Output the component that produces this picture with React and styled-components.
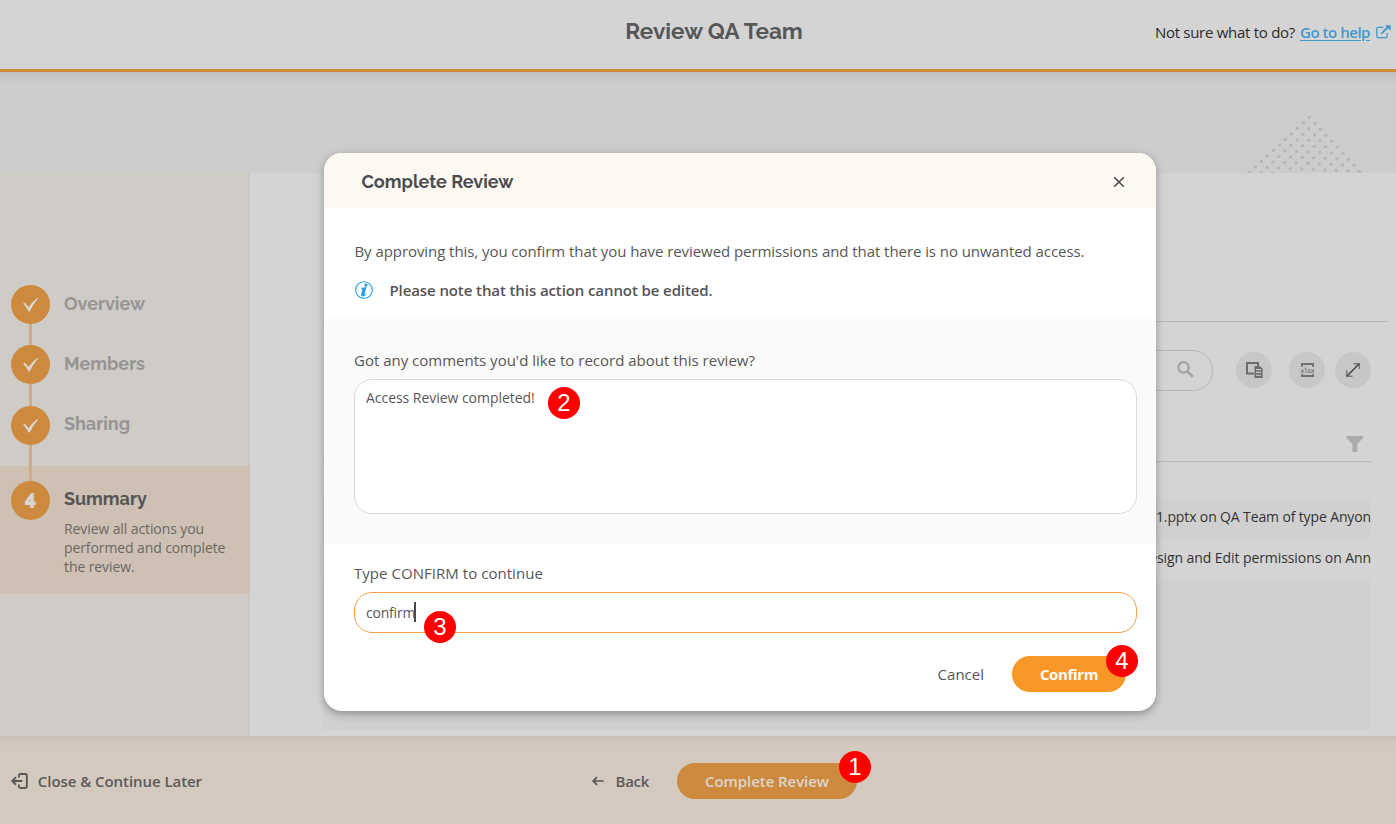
import React from 'react';
import styled, { createGlobalStyle, css } from 'styled-components';

const GlobalStyle = createGlobalStyle`
  * { box-sizing: border-box; }
  body { margin: 0; background: #d4d4d4; }
  button, input, textarea { font: inherit; margin: 0; }
`;

const bodyFont = css`font-family: "Segoe UI", "Open Sans", "Noto Sans", sans-serif;`;
const headingFont = css`
  font-family: "Raleway", "Lato", "Open Sans", sans-serif;
  font-weight: 700;
  font-variant-numeric: lining-nums;
`;
const tracking = css`letter-spacing: ${(p) => p.$track || 0}px;`;

const Page = styled.div`
  ${bodyFont}
  position: relative;
  width: 1396px;
  height: 824px;
  overflow: hidden;
  display: flex;
  flex-direction: column;
  color: #575757;
  font-size: 15px;
  line-height: 20px;
  white-space: nowrap;
`;

const Header = styled.header`
  flex: none;
  height: 72px;
  display: grid;
  grid-template-columns: 1fr auto 1fr;
  padding: 0 5px 7px 37px;
  align-items: center;
  background: #d4d4d4;
  border-bottom: 3px solid #cf8a3c;
`;
const PageTitle = styled.h1`
  ${headingFont}
  grid-column: 2;
  margin: 0;
  font-size: 22.5px;
  line-height: 28px;
  color: #575757;
`;
const Help = styled.div`
  display: flex;
  justify-content: flex-end;
  align-items: center;
  padding-top: 2px;
  color: #2b2b2b;
`;
const HelpText = styled.span`${tracking}`;
const HelpLink = styled.a`
  ${tracking}
  margin: 0 6px 0 5px;
  font-weight: 600;
  color: #4299cc;
  text-decoration: underline;
  text-underline-offset: 2px;
`;

const Banner = styled.div`
  flex: none;
  height: 101px;
  display: flex;
  justify-content: flex-end;
  align-items: flex-end;
  padding-right: 31px;
  background: linear-gradient(#bebebe, #c7c7c7 5px, #cccccc 12px);
`;

const Content = styled.div`
  flex: 1;
  min-height: 0;
  display: flex;
`;
const Sidebar = styled.nav`
  flex: none;
  width: 250px;
  padding-top: 101px;
  background: linear-gradient(to left, #cac7c2, #cfccc7 4px);
`;
const Step = styled.div`
  height: ${(p) => p.$height}px;
  display: flex;
  padding: ${(p) => p.$top}px 0 0 11px;
  background: ${(p) => (p.$active ? '#cec0b3' : 'transparent')};
`;
const StepTrack = styled.div`
  flex: none;
  width: 39px;
  margin-right: 14px;
  display: flex;
  flex-direction: column;
  align-items: center;
`;
const StepDot = styled.div`
  ${headingFont}
  flex: none;
  width: 39px;
  height: 39px;
  border-radius: 50%;
  display: flex;
  align-items: center;
  justify-content: center;
  background: #cd893d;
  color: #d8d5d0;
  font-size: 20px;
  font-weight: 900;
`;
const StepLine = styled.div`
  flex: none;
  width: 3px;
  height: ${(p) => p.$height}px;
  background: #cfad86;
`;
const StepConnector = styled.div`
  width: 3px;
  height: 11px;
  margin-left: 29px;
  background: #cfad86;
`;
const StepBody = styled.div`padding-top: ${(p) => p.$top}px;`;
const StepName = styled.div`
  ${headingFont}
  ${tracking}
  font-size: 18px;
  line-height: 22px;
  color: ${(p) => (p.$active ? '#555555' : '#959595')};
`;
const StepText = styled.div`
  padding-top: 9px;
  font-size: 14px;
  line-height: 19px;
  letter-spacing: -0.1px;
  color: #6a6866;
  white-space: pre-line;
`;

const Main = styled.main`
  flex: 1;
  min-width: 0;
  display: flex;
  flex-direction: column;
  padding: 0 25px 6px 73px;
  background: #d4d4d4;
`;
const Intro = styled.div`
  flex: none;
  height: 149px;
  margin-right: -17px;
  border-bottom: 1px solid #b9b9b9;
`;
const Toolbar = styled.div`
  flex: none;
  height: 69px;
  padding-top: 28px;
  display: flex;
  align-items: flex-start;
  justify-content: flex-end;
`;
const SearchBox = styled.div`
  width: 260px;
  height: 41px;
  margin-right: 23px;
  padding: 0 18px 2px 0;
  display: flex;
  align-items: center;
  justify-content: flex-end;
  border: 1px solid #b9b9b9;
  border-radius: 20px;
`;
const ToolButton = styled.button`
  width: 36px;
  height: 36px;
  padding: 0;
  margin: 2px 0 0 ${(p) => p.$gap || 0}px;
  border: 0;
  border-radius: 50%;
  display: flex;
  align-items: center;
  justify-content: center;
  background: #c7c7c7;
`;
const GridHeader = styled.div`
  flex: none;
  height: 71px;
  margin-bottom: 37px;
  padding: 0 8px 9px 0;
  display: flex;
  align-items: flex-end;
  justify-content: flex-end;
  border-bottom: 1px solid #b9b9b9;
`;
const GridRow = styled.div`
  ${tracking}
  height: 40px;
  ${(p) => p.$fill && 'flex: 1;'}
  overflow: hidden;
  text-align: right;
  font-size: 14px;
  line-height: ${(p) => p.$line || 38}px;
  color: #333333;
  background: ${(p) => (p.$shaded ? '#d0d0d0' : 'transparent')};
`;

const Footer = styled.footer`
  flex: none;
  height: 88px;
  display: flex;
  align-items: center;
  padding: 1px 11px 0;
  background: linear-gradient(#cabfb5, #d0c5bb 4px, #d3c9be 11px);
`;
const FooterLink = styled.button`
  ${tracking}
  width: ${(p) => p.$width}px;
  padding: 0;
  border: 0;
  background: none;
  display: flex;
  align-items: center;
  gap: ${(p) => p.$gap}px;
  margin-right: ${(p) => p.$after}px;
  font-weight: 600;
  color: #5c5a58;
`;
const PillButton = styled.button`
  ${tracking}
  position: relative;
  width: ${(p) => p.$width}px;
  height: 36px;
  padding: 0;
  border: 0;
  border-radius: 18px;
  background: ${(p) => (p.$dimmed ? '#cd893d' : '#f89728')};
  color: ${(p) => (p.$dimmed ? '#dbd5cd' : '#ffffff')};
  font-weight: ${(p) => (p.$dimmed ? 600 : 700)};
`;

const Badge = styled.span`
  position: absolute;
  left: ${(p) => p.$left}px;
  top: ${(p) => p.$top}px;
  width: 32px;
  height: 32px;
  border-radius: 50%;
  background: #fe0000;
  color: #ffffff;
  font: 400 24px/32px "Liberation Sans", Arial, sans-serif;
  letter-spacing: 0;
  text-align: center;
`;

const Overlay = styled.div`
  position: absolute;
  inset: 0;
  display: flex;
  align-items: flex-start;
  padding: 153px 0 0 324px;
`;
const Dialog = styled.section`
  width: 832px;
  height: 558px;
  display: flex;
  flex-direction: column;
  border-radius: 18px;
  background: #ffffff;
  box-shadow: 0 3px 9px rgba(0, 0, 0, 0.32);
`;
const DialogHeader = styled.div`
  flex: none;
  height: 55px;
  padding: 2px 31px 0 37.5px;
  display: flex;
  align-items: center;
  justify-content: space-between;
  border-radius: 18px 18px 0 0;
  background: #fff9f3;
`;
const DialogTitle = styled.h2`
  ${headingFont}
  margin: 0;
  font-size: 18px;
  color: #4c4c4e;
`;
const Statement = styled.div`
  flex: none;
  height: 111px;
  padding: 33px 30px 0 30.5px;
`;
const Line = styled.p`
  ${tracking}
  margin: 0;
`;
const Notice = styled.p`
  ${tracking}
  margin: 19px 0 0;
  display: flex;
  align-items: center;
  gap: 17px;
  font-weight: 600;
  color: #555556;
`;
const CommentSection = styled.div`
  flex: none;
  height: 225px;
  padding: 31px 19px 0 30px;
  background: #fafafa;
`;
const ConfirmSection = styled.div`padding: 19px 19px 0 30px;`;
const FieldLabel = styled.div`${tracking}`;
const Field = styled.div`
  ${tracking}
  position: relative;
  height: ${(p) => p.$height}px;
  margin-top: 9px;
  padding: ${(p) => p.$pad}px 11px 0;
  border: 1px solid ${(p) => (p.$focused ? '#f6a045' : '#d9d9d9')};
  border-radius: 18px;
  background: #ffffff;
  font-size: 14px;
`;
const Caret = styled.span`
  display: inline-block;
  width: 2px;
  height: 20px;
  margin-left: -1.5px;
  vertical-align: -4px;
  background: #4a4a4a;
`;
const Actions = styled.div`
  display: flex;
  align-items: center;
  justify-content: flex-end;
  padding: 23px 11px 0 0;
`;
const CancelButton = styled.button`
  padding: 0;
  border: 0;
  margin-right: 28px;
  background: none;
  color: #575757;
`;

const dots = [];
for (let i = 0; i <= 10; i += 1) {
  for (let j = 0; j <= 9; j += 1) {
    const x = 64.3 - 5.98 * i + 5.58 * j;
    const y = 5.3 + 5.52 * i + 6 * j;
    if (y < 64) dots.push([x, y]);
  }
}

const DotTriangle = () => (
  <svg width="120" height="61" fill="#b5b5b5">
    {dots.map(([x, y]) => <circle key={`${x}-${y}`} cx={x} cy={y} r="1.65" />)}
  </svg>
);
const ExternalIcon = () => (
  <svg width="15" height="14" viewBox="0 0 15 14" fill="none" stroke="#4299cc" strokeWidth="1.3">
    <path d="M7.5 2.3H2.2Q.8 2.3.8 3.7v7.6q0 1.4 1.4 1.4h7.6q1.4 0 1.4-1.4V8" />
    <path d="M5.2 8.8 12 2" strokeWidth="1.8" />
    <path d="M9 .3h5.7V6z" fill="#4299cc" stroke="none" />
  </svg>
);
const CheckIcon = () => (
  <svg width="15" height="14" viewBox="0 0 15 14" fill="#dbd8d3">
    <path d="M.1 5.6 1.8 4.8 5.6 9Q9.6 3.600 14.2 0L15 .6Q10.300 6.200 6.700 13.600H5.700Q3.100 9 .1 5.600z" />
  </svg>
);
const SearchIcon = () => (
  <svg width="17" height="17" viewBox="0 0 17 17" fill="none" stroke="#a2a2a2">
    <circle cx="6.5" cy="6.4" r="5.2" strokeWidth="2.2" />
    <path d="m10.3 10.3 5.5 5.4" strokeWidth="2.6" />
  </svg>
);
const ColumnsIcon = () => (
  <svg width="17" height="16" viewBox="0 0 17 16">
    <path d="M8 11.5H1V1h11v3" fill="none" stroke="#6d6d6d" strokeWidth="2" />
    <path d="M8.5 4h5.2L16.6 6.5V16H8.5z" fill="#6d6d6d" />
    <path d="M10 7.6h5M10 10.4h5M10 13.2h5" stroke="#c7c7c7" strokeWidth="1.1" />
  </svg>
);
const XlsxIcon = () => (
  <svg width="16" height="16" viewBox="0 0 16 16">
    <path d="M3 4.8V2h11v2.800M3 12v2h11v-2" fill="none" stroke="#717171" strokeWidth="2" />
    <text x="8.500" y="10.8" textAnchor="middle" textLength="14.5" fontFamily="DejaVu Sans Mono, monospace" fontSize="7" fontWeight="400" fill="#606060">xlsx</text>
  </svg>
);
const ExpandIcon = () => (
  <svg width="16" height="16" viewBox="0 0 16 16" fill="none">
    <path d="M8.6 1.7h5.7V7M1.7 8.5v5.8h5.8" stroke="#777777" strokeWidth="1.5" />
    <path d="M2 14 14 2" stroke="#404040" strokeWidth="1.5" />
  </svg>
);
const FilterIcon = () => (
  <svg width="17" height="16" viewBox="0 0 17 16" fill="#ababab">
    <path d="M.6 0h16.300v2.2L11.300 8v8H6.300V8L.6 2.2z" />
  </svg>
);
const CloseIcon = () => (
  <svg width="12" height="12" viewBox="0 0 12 12" stroke="#4c4c4e" strokeWidth="1.6">
    <path d="m1.2 1.2 9.6 9.6M10.8 1.2 1.2 10.8" />
  </svg>
);
const InfoIcon = () => (
  <svg width="18" height="18" viewBox="0 0 18 18" fill="#23a0e8">
    <circle cx="9" cy="9" r="8.3" fill="none" stroke="#23a0e8" strokeWidth="1.1" />
    <circle cx="10.9" cy="4.1" r="1.6" />
    <path d="M6.3 6.800q2.500-.1 5.200-.8L9.500 13q-.2 1 .4.6.8-.5 1.400-1.400l.5.3q-1.600 2.900-4.200 2.900-2 0-1.500-2.100L7.300 8.600q.2-.8-1.300-.9z" />
  </svg>
);
const ExitIcon = () => (
  <svg width="17" height="16" viewBox="0 0 17 16" fill="none" stroke="#5a5856" strokeWidth="1.9">
    <path d="M8 4.500V2.500q0-1.500 1.500-1.500H14.500q1.500 0 1.500 1.500v11q0 1.500-1.500 1.500H9.500Q8 15 8 13.500v-2" />
    <path d="M11.500 8H1.500M5 4.200 1.300 8 5 11.800" />
  </svg>
);
const BackIcon = () => (
  <svg width="12" height="10" viewBox="0 0 12 10" fill="none" stroke="#555453" strokeWidth="1.7">
    <path d="M12 5H1.5M5.2 1 1.2 5l4 4" />
  </svg>
);

const doneSteps = [
  { name: 'Overview', track: 0, height: 60, line: 22, top: 8 },
  { name: 'Members', track: 0, height: 61, line: 22, top: 8 },
  { name: 'Sharing', track: 0, height: 60, line: 21, top: 7 },
];

export default function App() {
  return (
    <Page>
      <GlobalStyle />
      <Header>
        <PageTitle>Review QA Team</PageTitle>
        <Help>
          <HelpText $track={-0.28}>Not sure what to do?</HelpText>
          <HelpLink $track={-0.46}>Go to help</HelpLink>
          <ExternalIcon />
        </Help>
      </Header>
      <Banner><DotTriangle /></Banner>
      <Content>
        <Sidebar>
          {doneSteps.map((s) => (
            <Step key={s.name} $height={s.height} $top={11}>
              <StepTrack>
                <StepDot><CheckIcon /></StepDot>
                <StepLine $height={s.line} />
              </StepTrack>
              <StepBody $top={s.top}><StepName $track={s.track}>{s.name}</StepName></StepBody>
            </Step>
          ))}
          <StepConnector />
          <Step $active $height={128} $top={0}>
            <StepTrack>
              <StepLine $height={15} />
              <StepDot>4</StepDot>
            </StepTrack>
            <StepBody $top={22}>
              <StepName $active>Summary</StepName>
              <StepText>{'Review all actions you\nperformed and complete\nthe review.'}</StepText>
            </StepBody>
          </Step>
        </Sidebar>
        <Main>
          <Intro />
          <Toolbar>
            <SearchBox><SearchIcon /></SearchBox>
            <ToolButton><ColumnsIcon /></ToolButton>
            <ToolButton $gap={17}><XlsxIcon /></ToolButton>
            <ToolButton $gap={10}><ExpandIcon /></ToolButton>
          </Toolbar>
          <GridHeader><FilterIcon /></GridHeader>
          <GridRow $shaded $line={36} $track={-0.13}>1.pptx on QA Team of type Anyon</GridRow>
          <GridRow $track={-0.08}>Design and Edit permissions on Ann</GridRow>
          <GridRow $shaded $fill />
        </Main>
      </Content>
      <Footer>
        <FooterLink $width={191} $gap={10} $after={390} $track={-0.06}><ExitIcon />Close &amp; Continue Later</FooterLink>
        <FooterLink $width={57} $gap={12} $after={28} $track={-0.3}><BackIcon />Back</FooterLink>
        <PillButton $dimmed $width={180} $track={-0.06}>
          Complete Review
          <Badge $left={162} $top={-12}>1</Badge>
        </PillButton>
      </Footer>

      <Overlay>
        <Dialog>
          <DialogHeader>
            <DialogTitle>Complete Review</DialogTitle>
            <CloseIcon />
          </DialogHeader>
          <Statement>
            <Line $track={-0.065}>By approving this, you confirm that you have reviewed permissions and that there is no unwanted access.</Line>
            <Notice $track={-0.1}><InfoIcon />Please note that this action cannot be edited.</Notice>
          </Statement>
          <CommentSection>
            <FieldLabel>Got any comments you'd like to record about this review?</FieldLabel>
            <Field $height={135} $pad={8} $track={-0.04}>
              Access Review completed!
              <Badge $left={193} $top={7}>2</Badge>
            </Field>
          </CommentSection>
          <ConfirmSection>
            <FieldLabel $track={0.04}>Type CONFIRM to continue</FieldLabel>
            <Field $focused $height={41} $pad={9} $track={-0.2}>
              confirm<Caret />
              <Badge $left={69} $top={18}>3</Badge>
            </Field>
            <Actions>
              <CancelButton>Cancel</CancelButton>
              <PillButton $width={114} $track={-0.35}>
                Confirm
                <Badge $left={94} $top={-11}>4</Badge>
              </PillButton>
            </Actions>
          </ConfirmSection>
        </Dialog>
      </Overlay>
    </Page>
  );
}
